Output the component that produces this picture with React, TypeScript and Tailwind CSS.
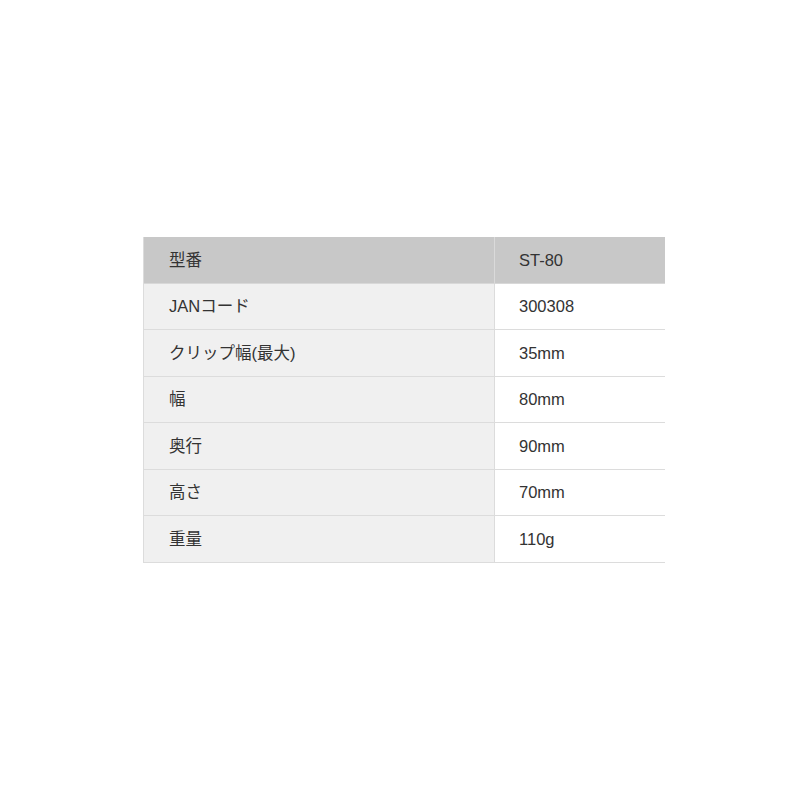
import React from "react";

const rows: [string, string][] = [
  ["JANコード", "300308"],
  ["クリップ幅(最大)", "35mm"],
  ["幅", "80mm"],
  ["奥行", "90mm"],
  ["高さ", "70mm"],
  ["重量", "110g"],
];

export default function App() {
  const heights = ["h-[46px]", "h-[47px]", "h-[46px]", "h-[47px]", "h-[46px]", "h-[47px]"];
  return (
    <div
      className="w-[800px] h-[800px] bg-white pt-[237px] pl-[143px] text-[16.5px] text-[#333]"
      style={{ fontFamily: '"Liberation Sans", Arial, "Noto Sans CJK JP", sans-serif' }}
    >
      <div className="w-[522px] border-l border-[#dcdcdc]">
        <div className="flex h-[47px] bg-[#c8c8c8] border-b border-[#d8d8d8]">
          <div className="w-[351px] flex items-center pl-[25px] border-r border-[#dadada]">型番</div>
          <div className="flex-1 flex items-center pl-[24px]">ST-80</div>
        </div>
        {rows.map(([k, v], i) => (
          <div key={k} className={`flex ${heights[i]} border-b border-[#dcdcdc]`}>
            <div className="w-[351px] flex items-center pl-[25px] bg-[#f0f0f0] border-r border-[#dcdcdc]">{k}</div>
            <div className="flex-1 flex items-center pl-[24px] bg-white">{v}</div>
          </div>
        ))}
      </div>
    </div>
  );
}
